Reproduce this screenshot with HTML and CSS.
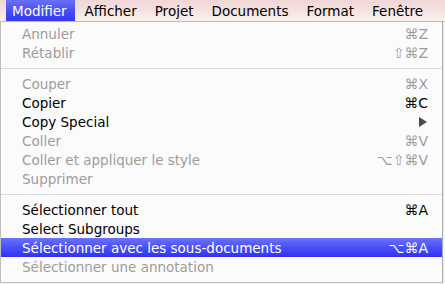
FILE: index.html
```html
<!DOCTYPE html>
<html>
<head>
<meta charset="utf-8">
<link rel="stylesheet" href="styles.css">
</head>
<body>
<div class="menubar">
  <span class="title active">Modifier</span>
  <span class="title">Afficher</span>
  <span class="title">Projet</span>
  <span class="title">Documents</span>
  <span class="title">Format</span>
  <span class="title">Fenêtre</span>
</div>
<div class="menu">
  <div class="item disabled"><span class="label">Annuler</span><span class="key">⌘Z</span></div>
  <div class="item disabled"><span class="label">Rétablir</span><span class="key">⇧⌘Z</span></div>
  <div class="sep"></div>
  <div class="item disabled"><span class="label">Couper</span><span class="key">⌘X</span></div>
  <div class="item"><span class="label">Copier</span><span class="key">⌘C</span></div>
  <div class="item"><span class="label">Copy Special</span><span class="arrow"></span></div>
  <div class="item disabled"><span class="label">Coller</span><span class="key">⌘V</span></div>
  <div class="item disabled"><span class="label">Coller et appliquer le style</span><span class="key">⌥⇧⌘V</span></div>
  <div class="item disabled"><span class="label">Supprimer</span></div>
  <div class="sep"></div>
  <div class="item"><span class="label">Sélectionner tout</span><span class="key">⌘A</span></div>
  <div class="item"><span class="label">Select Subgroups</span></div>
  <div class="item selected"><span class="label">Sélectionner avec les sous-documents</span><span class="key">⌥⌘A</span></div>
  <div class="item disabled"><span class="label">Sélectionner une annotation</span></div>
</div>
</body>
</html>
```
FILE: styles.css
```css
html, body {
  margin: 0;
  padding: 0;
  width: 445px;
  height: 284px;
  overflow: hidden;
  background: #f2f2f2;
  font-family: "DejaVu Sans", sans-serif;
}
.menubar {
  height: 21px;
  display: flex;
  align-items: stretch;
  padding-left: 6px;
  gap: 4px;
  background: linear-gradient(to bottom, #f1d6d6 0%, #f4e2e0 50%, #faf1ef 100%);
  border-bottom: 1px solid #c9b9b6;
  font-size: 13.5px;
  color: #000;
}
.title {
  display: flex;
  align-items: center;
  padding: 0 8px 0 6px;
}
.title.active {
  color: #fff;
  background: linear-gradient(to bottom, #6b70fa 0%, #4a4ff6 50%, #3438f2 100%);
}
.menu {
  height: 261px;
  margin-right: 2px;
  padding-top: 2px;
  box-sizing: border-box;
  background: #fbfbfb;
  border-left: 1px solid #bdbdbd;
  border-right: 1px solid #a9a9a9;
  border-bottom: 1px solid #bdbdbd;
  font-size: 13.5px;
}
.item {
  height: 19px;
  display: flex;
  align-items: center;
  justify-content: space-between;
  padding: 0 14px 0 21px;
  color: #000;
}
.item.disabled {
  color: #9c9c9c;
}
.item.selected {
  color: #fff;
  background: linear-gradient(to bottom, #6c72fa 0%, #4a50f7 50%, #2f33f2 100%);
}
.key {
  font-size: 14px;
}
.arrow {
  width: 0;
  height: 0;
  border-top: 5px solid transparent;
  border-bottom: 5px solid transparent;
  border-left: 8px solid #4a4a4a;
  margin-right: 1px;
}
.sep {
  height: 1px;
  margin: 6px 0 5px;
  background: #dcdcdc;
}
```
